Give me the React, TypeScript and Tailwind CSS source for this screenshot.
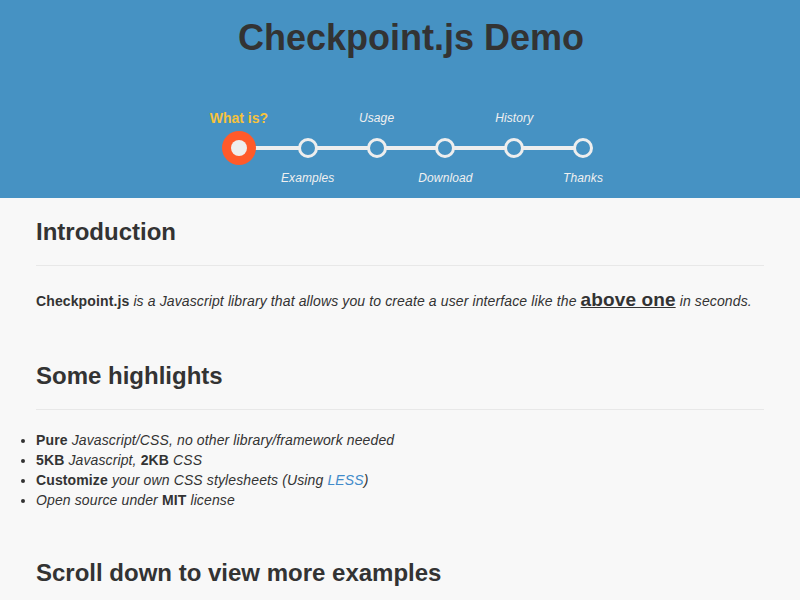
const steps = [
  { label: 'What is?', above: true },
  { label: 'Examples', above: false },
  { label: 'Usage', above: true },
  { label: 'Download', above: false },
  { label: 'History', above: true },
  { label: 'Thanks', above: false },
];

function Timeline() {
  return (
    <div className="relative mx-auto grid w-[413px] grid-cols-6">
      <div className="absolute left-[34px] right-[34px] top-[36px] h-[4px] bg-[#eeeeee]"></div>
      {steps.map((step, i) => {
        const active = i === 0;
        const label = (
          <span
            className={
              active
                ? 'text-[14px] font-bold text-[#f7c23c]'
                : 'text-[12px] italic tracking-[0.1px] text-[#f0f0f0]'
            }
          >
            {step.label}
          </span>
        );
        return (
          <div key={step.label} className="relative flex flex-col items-center">
            <div className="flex h-[16px] items-center justify-center leading-[16px] whitespace-nowrap">
              {step.above ? label : null}
            </div>
            <div className="flex h-[44px] items-center justify-center">
              {active ? (
                <div className="flex h-[34px] w-[34px] items-center justify-center rounded-full bg-[#ff5a2a]">
                  <div className="h-[16px] w-[16px] rounded-full bg-[#eeeeee]"></div>
                </div>
              ) : (
                <div className="h-[20px] w-[20px] rounded-full border-[3px] border-[#eeeeee] bg-[#4692c3]"></div>
              )}
            </div>
            <div className="flex h-[16px] items-center justify-center leading-[16px] whitespace-nowrap">
              {step.above ? null : label}
            </div>
          </div>
        );
      })}
    </div>
  );
}

export default function App() {
  return (
    <div className="min-h-[600px] bg-[#f8f8f8] font-['Liberation_Sans',Arial,sans-serif] text-[#333333]">
      <header className="h-[198px] bg-[#4692c3] pl-[22px] pt-[18px]">
        <h1 className="text-center text-[36px] font-bold leading-[40px] text-[#333333]">Checkpoint.js Demo</h1>
        <div className="mt-[52px]">
          <Timeline />
        </div>
      </header>

      <main className="px-[36px]">
        <h2 className="mt-[21px] text-[24px] font-bold leading-[26px]">Introduction</h2>
        <hr className="mt-[20px] border-t border-[#e8e8e8]" />
        <p className="mt-[24px] text-[14px] leading-[20px] tracking-[0.12px]">
          <b>Checkpoint.js</b>{' '}
          <i>is a Javascript library that allows you to create a user interface like the</i>{' '}
          <a href="#" className="text-[19px] font-bold leading-none text-[#333333] underline">above one</a>{' '}
          <i>in seconds.</i>
        </p>

        <h2 className="mt-[52px] text-[24px] font-bold leading-[26px]">Some highlights</h2>
        <hr className="mt-[20px] border-t border-[#e8e8e8]" />
        <ul className="mt-[20px] list-disc text-[14px] leading-[20px] tracking-[0.12px]">
          <li>
            <b>Pure</b> <i>Javascript/CSS, no other library/framework needed</i>
          </li>
          <li>
            <b>5KB</b> <i>Javascript,</i> <b>2KB</b> <i>CSS</i>
          </li>
          <li>
            <b>Customize</b> <i>your own CSS stylesheets (Using </i>
            <a href="#" className="italic text-[#428bca]">LESS</a>
            <i>)</i>
          </li>
          <li>
            <i>Open source under</i> <b>MIT</b> <i>license</i>
          </li>
        </ul>

        <h2 className="mt-[50px] text-[24px] font-bold leading-[26px]">Scroll down to view more examples</h2>
      </main>
    </div>
  );
}
